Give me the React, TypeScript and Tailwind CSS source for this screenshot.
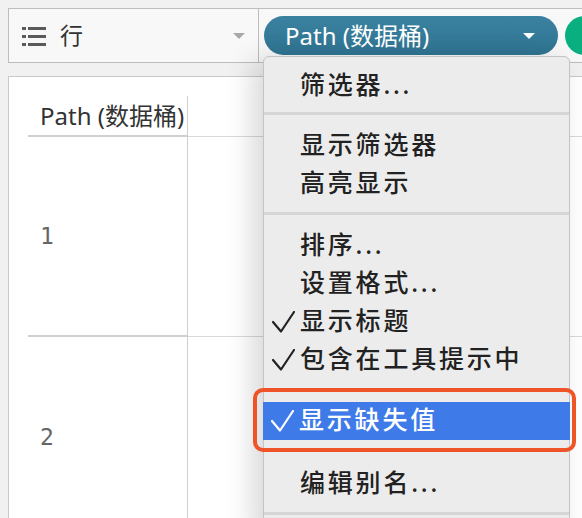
import type { ReactNode } from "react";

const font = { fontFamily: '"Noto Sans", "Noto Sans CJK SC", sans-serif' };
const mono = { fontFamily: '"DejaVu Sans Mono", monospace' };

const Check = ({ white }: { white?: boolean }) => (
  <svg width="23" height="22" viewBox="0 0 23 22" fill="none">
    <path
      d="M1 11 L9 20.5 L22 1"
      stroke={white ? "#ffffff" : "#222222"}
      strokeWidth="2.2"
      strokeLinecap="round"
      strokeLinejoin="round"
    />
  </svg>
);

const Item = ({ children, checked, active }: { children: ReactNode; checked?: boolean; active?: boolean }) => (
  <div
    className={`flex items-center h-[38px] ${active ? "bg-[#3f7be8] text-white" : "text-[#222]"}`}
  >
    <div className="w-[38px] pl-[8px] flex items-center">{checked && <Check white={active} />}</div>
    <span className="relative -top-[2px] -ml-[2px] text-[25px] font-medium tracking-[2.8px] leading-none">{children}</span>
  </div>
);

const Sep = () => <div className="h-[3px] bg-[#d6d6d6]" />;

export default function App() {
  return (
    <div className="relative w-[582px] h-[518px] overflow-hidden bg-[#f1f1f1] pt-2 pl-2" style={font}>
      {/* shelf */}
      <div className="flex h-[55px] border-t border-b border-[#bdbdbd] bg-[#f8f8f8]">
        <div className="w-[251px] shrink-0 flex items-center border-l border-r border-[#bdbdbd] pl-[13px] pr-[13px]">
          <svg width="24" height="20" viewBox="0 0 24 20">
            <rect x="0" y="1" width="4" height="3" fill="#5a5a5a" />
            <rect x="6" y="1" width="18" height="3" fill="#5a5a5a" />
            <rect x="0" y="9" width="4" height="3" fill="#5a5a5a" />
            <rect x="6" y="9" width="18" height="3" fill="#5a5a5a" />
            <rect x="0" y="17" width="4" height="3" fill="#5a5a5a" />
            <rect x="6" y="17" width="18" height="3" fill="#5a5a5a" />
          </svg>
          <span className="ml-[14px] text-[23px] text-[#333]">行</span>
          <span className="ml-auto w-0 h-0 border-l-[6px] border-r-[6px] border-t-[6px] border-l-transparent border-r-transparent border-t-[#a8a8a8]" />
        </div>
        <div className="flex items-center pl-[5px] gap-[7px]">
          <div className="w-[294px] h-[39px] shrink-0 rounded-full bg-gradient-to-b from-[#3b82a0] to-[#2f7492] flex items-center pl-[21px] pr-[23px]">
            <span className="text-white text-[24px] leading-none whitespace-nowrap">Path (数据桶)</span>
            <span className="ml-auto w-0 h-0 border-l-[6px] border-r-[6px] border-t-[6px] border-l-transparent border-r-transparent border-t-white" />
          </div>
          <div className="w-[40px] h-[39px] shrink-0 rounded-l-full bg-[#0aaf80]" />
        </div>
      </div>

      {/* view panel */}
      <div className="mt-[13px] h-[460px] bg-white border-t border-l border-[#c9c9c9] pt-[19px] pl-[19px]">
        <div className="flex">
          <div className="w-[160px] shrink-0">
            <div className="h-[41px] border-b-2 border-r border-[#cfcfcf] pl-[12px] flex items-center">
              <span className="text-[24px] text-[#333] whitespace-nowrap leading-none">Path (数据桶)</span>
            </div>
            <div className="h-[200px] border-b-2 border-r border-[#cfcfcf] pl-[12px] flex items-center">
              <span className="text-[23px] text-[#666]" style={mono}>1</span>
            </div>
            <div className="h-[200px] border-r border-[#cfcfcf] pl-[12px] flex items-center">
              <span className="text-[23px] text-[#666]" style={mono}>2</span>
            </div>
          </div>
          <div className="flex-1">
            <div className="h-[41px] border-b border-[#d9d9d9]" />
            <div className="h-[200px] border-b border-[#d9d9d9]" />
          </div>
        </div>
      </div>

      {/* context menu */}
      <div className="absolute left-[263px] top-[56px] w-[307px] h-[480px] bg-[#ececec] border border-[#c4c4c4] rounded-t-[6px] shadow-[-10px_4px_28px_rgba(0,0,0,0.16)]">
        <div className="pt-[10px] pb-[7px]">
          <Item>筛选器...</Item>
        </div>
        <Sep />
        <div className="pt-[12px] pb-[9px]">
          <Item>显示筛选器</Item>
          <Item>高亮显示</Item>
        </div>
        <Sep />
        <div className="pt-[12px] pb-[9px]">
          <Item>排序...</Item>
          <Item>设置格式...</Item>
          <Item checked>显示标题</Item>
          <Item checked>包含在工具提示中</Item>
        </div>
        <Sep />
        <div className="pt-[11px] pb-[9px] -mx-px">
          <Item checked active>显示缺失值</Item>
        </div>
        <Sep />
        <div className="pt-[13px] pb-[9px]">
          <Item>编辑别名...</Item>
        </div>
        <Sep />
      </div>

      {/* highlight callout */}
      <div className="absolute left-[253px] top-[388px] w-[323px] h-[64px] border-4 border-[#ee5427] rounded-[10px]" />
    </div>
  );
}
